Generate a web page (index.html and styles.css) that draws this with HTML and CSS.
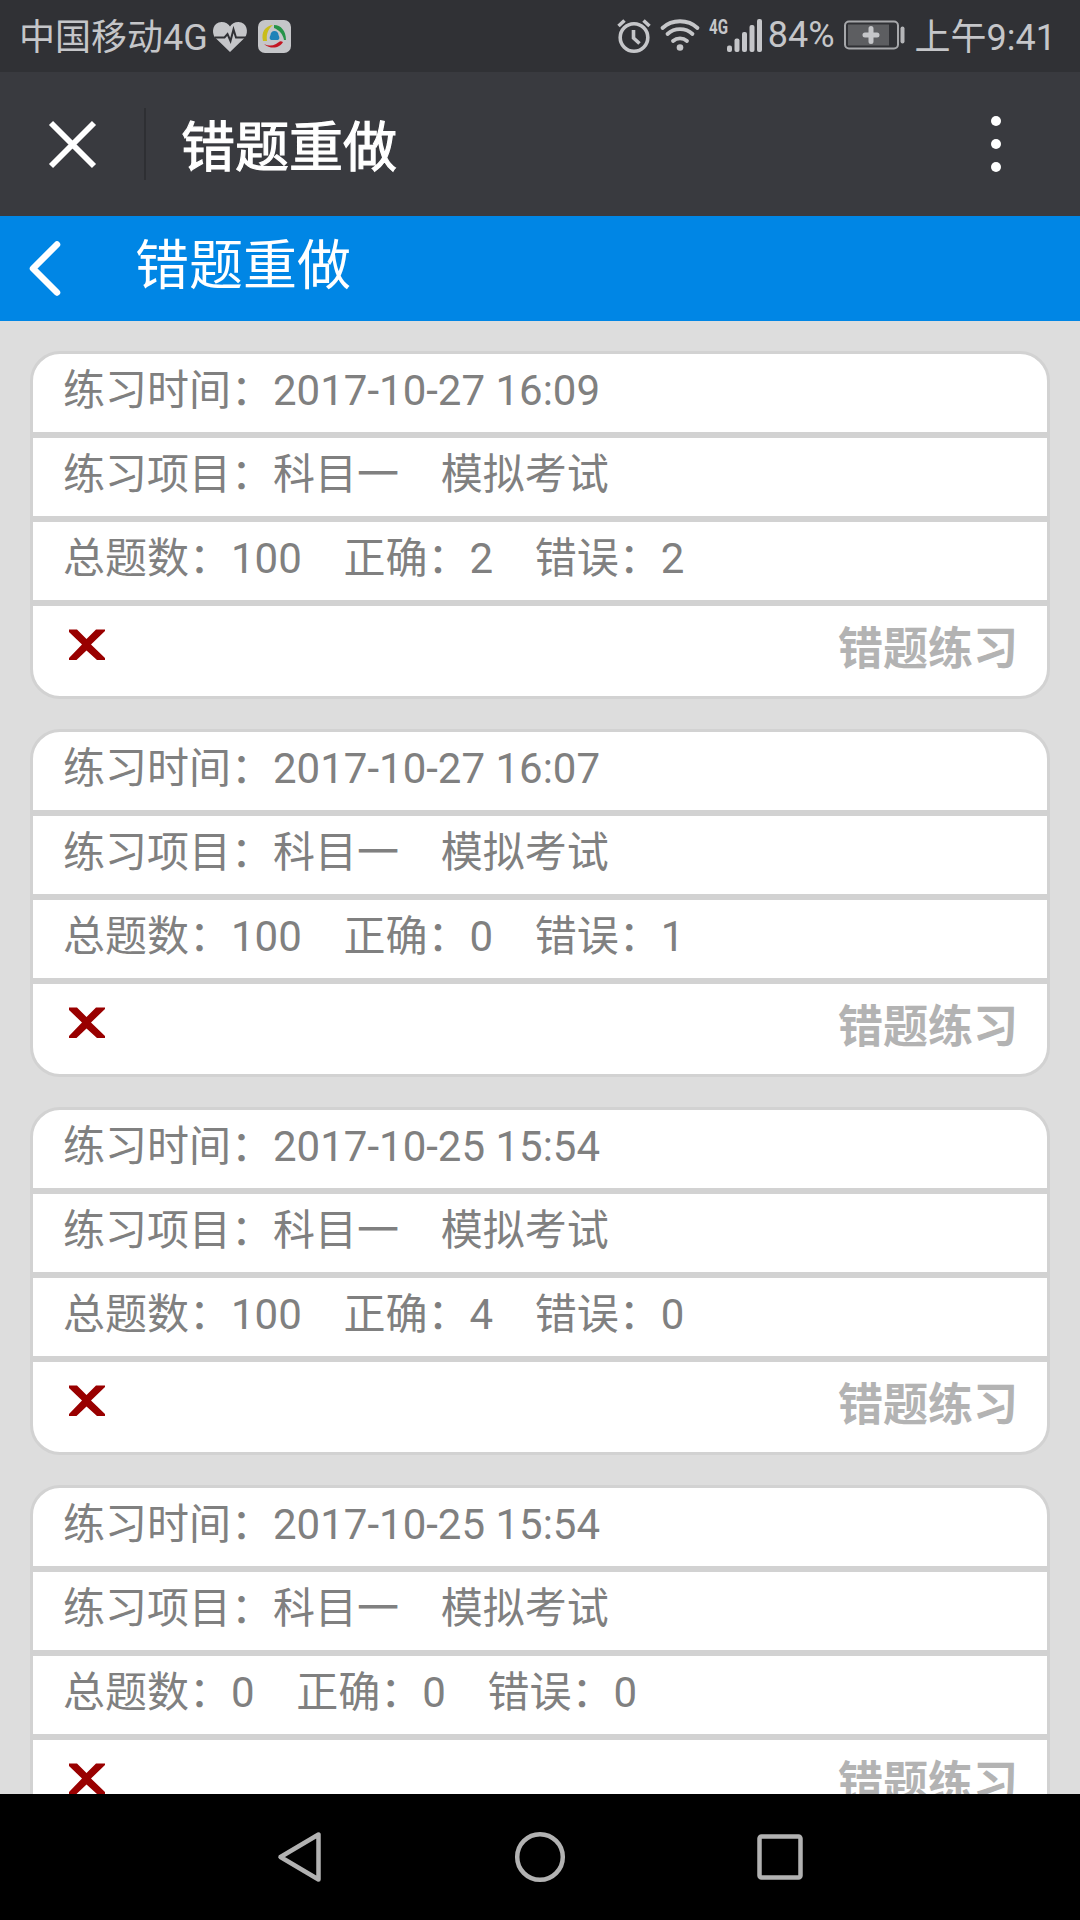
FILE: index.html
```html
<!DOCTYPE html>
<html lang="zh-CN">
<head>
    <meta charset="UTF-8">
    <meta name="viewport" content="width=device-width, initial-scale=1.0">
    <title>错题重做</title>
    <link rel="stylesheet" href="styles.css">
</head>
<body>
    <div class="status-bar">
        <span class="carrier">中国移动4G</span>
        <svg class="icon-heart" width="36" height="32" viewBox="0 0 36 32">
            <path fill="#c5c6c9" d="M18 31 L3 16.500 C-1 11 1 1 9.500 1 C13.500 1 16.500 3 18 5.500 C19.500 3 22.500 1 26.500 1 C35 1 37 11 33 16.500 Z"/>
            <path fill="none" stroke="#303135" stroke-width="2" d="M3 16.500 H12.500 L15.500 13 L18.500 20 L21.500 8.500 L24 16.500 H34"/>
        </svg>
        <svg class="icon-app" width="33" height="33" viewBox="0 0 33 33">
            <rect width="33" height="33" rx="7" fill="#c5c6c9"/>
            <path fill="#c9bd1c" d="M15 5 C7 6 3 12 5 21 L9 21 C8 14 10 9 15 5 Z"/>
            <path fill="#259348" d="M16 5 C23 5 28 11 28 20 L26 20 C25 14 21 10 16 8 Z"/>
            <path fill="#c31522" d="M6 24 C13 30 22 28 25 22 C22 20 21 22 18 24 C14 26 10 26 6 24 Z"/>
            <path fill="#1e82b8" d="M16.500 11 C19 11 20.500 13 20.500 15 C21.500 17 22 19 20 20 H13 C11 19 11.500 17 12.500 15 C12.500 13 14 11 16.500 11 Z"/>
        </svg>
        <div class="status-right">
            <svg class="icon-alarm" width="34" height="36" viewBox="0 0 34 36">
                <g fill="none" stroke="#c5c6c9" stroke-width="3.600">
                    <circle cx="17" cy="20.500" r="13.800"/>
                    <path d="M16.500 13 V21 L22.500 26.500"/>
                    <path d="M1.500 9 L7.500 3.500 M26.500 3.500 L32.500 9"/>
                </g>
            </svg>
            <svg class="icon-wifi" width="40" height="34" viewBox="0 0 40 34">
                <g fill="none" stroke="#c5c6c9" stroke-width="3.800" stroke-linecap="round">
                    <path d="M2.500 10 C12 1 28 1 37.500 10"/>
                    <path d="M7.500 16 C14.500 9.500 25.500 9.500 32.500 16"/>
                    <path d="M13 23 C17 19.500 23 19.500 27 23"/>
                </g>
                <circle cx="20" cy="29.500" r="3.300" fill="#c5c6c9"/>
            </svg>
            <svg class="icon-signal" width="54" height="36" viewBox="0 0 54 36">
                <text class="net-type" x="0" y="17" textLength="19" lengthAdjust="spacingAndGlyphs">4G</text>
                <g fill="#c5c6c9">
                    <rect x="18" y="28.500" width="5" height="6.500" rx="2"/>
                    <rect x="25.500" y="21.500" width="5" height="13.500" rx="2"/>
                    <rect x="33" y="15" width="5" height="20" rx="2"/>
                    <rect x="40.500" y="8" width="5" height="27" rx="2"/>
                    <rect x="48" y="2" width="5" height="33" rx="2"/>
                </g>
            </svg>
            <span class="percent">84%</span>
            <svg class="icon-battery" width="62" height="30" viewBox="0 0 62 30">
                <rect x="1" y="1.500" width="53" height="27" rx="4" fill="none" stroke="#a6a7aa" stroke-width="2"/>
                <rect x="4" y="4.500" width="41" height="21" fill="#5d5e61"/>
                <path stroke="#c5c6c9" stroke-width="5" stroke-linecap="round" d="M27 8.500 V21.500 M21 15 H33"/>
                <rect x="56.500" y="6.500" width="4" height="17" rx="2" fill="#b5b6b9"/>
            </svg>
            <span class="time">上午9:41</span>
        </div>
    </div>

    <div class="app-bar">
        <svg class="icon-close" width="48" height="48" viewBox="0 0 48 48">
            <path stroke="#fff" stroke-width="5.800" d="M3 3 L46 46 M46 3 L3 46"/>
        </svg>
        <div class="separator"></div>
        <h1 class="app-title">错题重做</h1>
        <svg class="icon-more" width="10" height="56" viewBox="0 0 10 56">
            <g fill="#fff">
                <circle cx="5" cy="5" r="5"/>
                <circle cx="5" cy="28" r="5"/>
                <circle cx="5" cy="51" r="5"/>
            </g>
        </svg>
    </div>

    <div class="page-header">
        <svg class="icon-back" width="32" height="56" viewBox="0 0 32 56">
            <path fill="none" stroke="#fff" stroke-width="6.500" stroke-linecap="round" stroke-linejoin="round" d="M28 3.500 L4 27.500 L28 51.500"/>
        </svg>
        <h2 class="page-title">错题重做</h2>
    </div>

    <div class="list">
        <div class="card">
            <div class="row">练习时间：2017-10-27 16:09</div>
            <div class="row">练习项目：科目一&nbsp;&nbsp;&nbsp;&nbsp;模拟考试</div>
            <div class="row">总题数：100&nbsp;&nbsp;&nbsp;&nbsp;正确：2&nbsp;&nbsp;&nbsp;&nbsp;错误：2</div>
            <div class="actions">
                <svg class="icon-delete" width="38" height="32" viewBox="0 0 38 32"><path d="M1 0.500 H9 L18.500 10 L28 0.500 H37 V2 L23 15.500 L37 29 V31 H29 L18.500 21.500 L8.500 31 H1 V29 L14 15.500 L1 3 Z"/></svg>
                <span class="practice">错题练习</span>
            </div>
        </div>

        <div class="card">
            <div class="row">练习时间：2017-10-27 16:07</div>
            <div class="row">练习项目：科目一&nbsp;&nbsp;&nbsp;&nbsp;模拟考试</div>
            <div class="row">总题数：100&nbsp;&nbsp;&nbsp;&nbsp;正确：0&nbsp;&nbsp;&nbsp;&nbsp;错误：1</div>
            <div class="actions">
                <svg class="icon-delete" width="38" height="32" viewBox="0 0 38 32"><path d="M1 0.500 H9 L18.500 10 L28 0.500 H37 V2 L23 15.500 L37 29 V31 H29 L18.500 21.500 L8.500 31 H1 V29 L14 15.500 L1 3 Z"/></svg>
                <span class="practice">错题练习</span>
            </div>
        </div>

        <div class="card">
            <div class="row">练习时间：2017-10-25 15:54</div>
            <div class="row">练习项目：科目一&nbsp;&nbsp;&nbsp;&nbsp;模拟考试</div>
            <div class="row">总题数：100&nbsp;&nbsp;&nbsp;&nbsp;正确：4&nbsp;&nbsp;&nbsp;&nbsp;错误：0</div>
            <div class="actions">
                <svg class="icon-delete" width="38" height="32" viewBox="0 0 38 32"><path d="M1 0.500 H9 L18.500 10 L28 0.500 H37 V2 L23 15.500 L37 29 V31 H29 L18.500 21.500 L8.500 31 H1 V29 L14 15.500 L1 3 Z"/></svg>
                <span class="practice">错题练习</span>
            </div>
        </div>

        <div class="card">
            <div class="row">练习时间：2017-10-25 15:54</div>
            <div class="row">练习项目：科目一&nbsp;&nbsp;&nbsp;&nbsp;模拟考试</div>
            <div class="row">总题数：0&nbsp;&nbsp;&nbsp;&nbsp;正确：0&nbsp;&nbsp;&nbsp;&nbsp;错误：0</div>
            <div class="actions">
                <svg class="icon-delete" width="38" height="32" viewBox="0 0 38 32"><path d="M1 0.500 H9 L18.500 10 L28 0.500 H37 V2 L23 15.500 L37 29 V31 H29 L18.500 21.500 L8.500 31 H1 V29 L14 15.500 L1 3 Z"/></svg>
                <span class="practice">错题练习</span>
            </div>
        </div>
    </div>

    <div class="nav-bar">
        <svg width="50" height="50" viewBox="0 0 50 50">
            <path d="M43.500 2.500 V47.500 L5.500 25 Z"/>
        </svg>
        <svg width="50" height="50" viewBox="0 0 50 50">
            <circle cx="25" cy="25" r="22.800"/>
        </svg>
        <svg width="50" height="50" viewBox="0 0 50 50">
            <rect x="4.500" y="4.500" width="41" height="41" rx="2"/>
        </svg>
    </div>
</body>
</html>
```
FILE: styles.css
```css
* {
    box-sizing: border-box;
}
body {
    margin: 0;
    height: 1920px;
    display: flex;
    flex-direction: column;
    overflow: hidden;
    background: #dddddd;
    font-family: Roboto, "Noto Sans CJK SC", sans-serif;
}
svg {
    display: block;
    flex: none;
    overflow: visible;
}

/* system status bar */
.status-bar {
    flex: none;
    height: 72px;
    display: flex;
    align-items: flex-start;
    padding: 0 24px 0 19px;
    background: #303135;
    color: #c5c6c9;
    font-size: 36px;
    line-height: 76px;
    white-space: nowrap;
}
.icon-heart {
    margin: 21px 0 0 4px;
}
.icon-app {
    margin: 20px 0 0 10px;
}
.status-right {
    display: flex;
    margin-left: auto;
}
.icon-alarm {
    margin: 17px 9px 0 0;
}
.icon-wifi {
    margin: 18px 9px 0 0;
}
.icon-signal {
    margin: 17px 5px 0 0;
}
.net-type {
    font-size: 20px;
    font-weight: bold;
    fill: #c5c6c9;
}
.percent {
    line-height: 70px;
    margin-right: 9px;
}
.icon-battery {
    margin: 20px 9px 0 0;
}

/* browser title bar */
.app-bar {
    flex: none;
    height: 144px;
    display: flex;
    align-items: center;
    padding: 0 79px 0 48px;
    background: #393a3f;
    color: #fff;
}
.separator {
    width: 2px;
    height: 72px;
    margin: 0 35px 0 48px;
    background: #2e2f33;
}
.app-title {
    margin: 9px 0 0;
    font-size: 54px;
    font-weight: normal;
    line-height: 135px;
    -webkit-text-stroke: 1.2px #fff;
}
.icon-more {
    margin-left: auto;
}

/* page header */
.page-header {
    flex: none;
    height: 105px;
    display: flex;
    align-items: center;
    padding-left: 29px;
    background: #0086e5;
    color: #fff;
}
.page-title {
    margin: 0 0 3px 74px;
    font-size: 54px;
    font-weight: normal;
    line-height: 100px;
}

/* record list */
.list {
    flex: 1;
    min-height: 0;
    overflow: hidden;
    padding: 30px 30px 0;
}
.card {
    height: 348px;
    margin-bottom: 30px;
    background: #fff;
    border: 3px solid #d2d2d2;
    border-radius: 30px;
    overflow: hidden;
}
.row {
    height: 84px;
    padding-left: 30px;
    border-bottom: 6px solid #d2d2d2;
    color: #808080;
    font-size: 42px;
    line-height: 74px;
}
.actions {
    height: 90px;
    display: flex;
    justify-content: space-between;
    padding: 0 29px 0 35px;
}
.icon-delete {
    margin-top: 23px;
    fill: #990000;
}
.practice {
    color: #b3b3b3;
    font-size: 45px;
    font-weight: bold;
    line-height: 88px;
}

/* system navigation */
.nav-bar {
    flex: none;
    height: 126px;
    display: flex;
    justify-content: center;
    gap: 190px;
    padding-top: 38px;
    background: #000;
}
.nav-bar svg {
    fill: none;
    stroke: #b2b2b2;
    stroke-width: 4.5;
    stroke-linejoin: round;
}
```
